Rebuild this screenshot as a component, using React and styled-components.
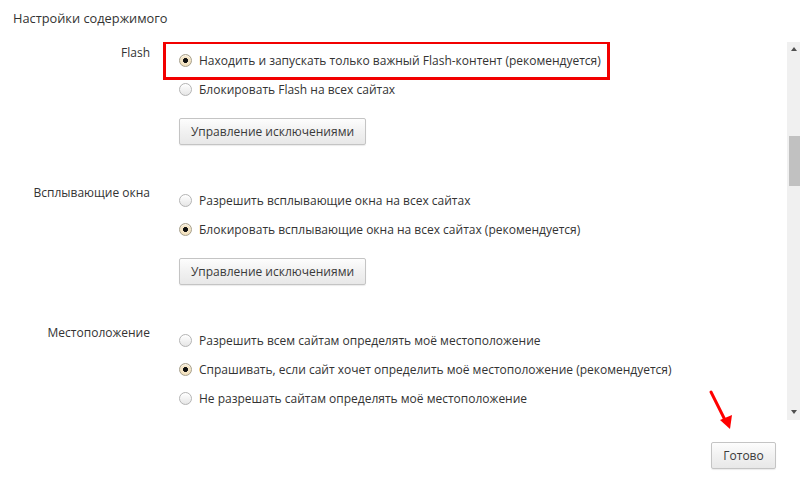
import React from "react";
import styled, { createGlobalStyle } from "styled-components";

const Global = createGlobalStyle`
  html, body { margin: 0; padding: 0; background: #fff; }
  body { font-family: "Open Sans", "Noto Sans", "Liberation Sans", sans-serif; color: #333; }
`;

const Page = styled.div`
  position: relative;
  width: 800px;
  height: 485px;
  overflow: hidden;
  display: flex;
  flex-direction: column;
  background: #fff;
`;

const Header = styled.div`
  height: 42px;
  padding: 9px 0 0 13px;
  box-sizing: border-box;
  font-size: 12.8px;
  line-height: 18px;
  color: #333;
`;

const Body = styled.div`
  display: flex;
  height: 378px;
`;

const Pane = styled.div`
  flex: 1;
  overflow: hidden;
  padding-top: 3px;
`;

const Section = styled.div`
  display: grid;
  grid-template-columns: 150px 1fr;
  column-gap: 29px;
  margin-bottom: 40px;
`;

const Label = styled.div`
  text-align: right;
  font-size: 12px;
  line-height: 16px;
  color: #333;
`;

const Options = styled.div`
  display: flex;
  flex-direction: column;
  align-items: flex-start;
  margin-top: 1px;
`;

const Row = styled.label`
  position: relative;
  display: inline-flex;
  align-items: center;
  height: 29px;
  gap: 7px;
  font-size: 12px;
  color: #333;
  white-space: nowrap;
  &::after {
    content: "";
    display: ${(p) => (p.$highlight ? "block" : "none")};
    position: absolute;
    left: -16px;
    right: -9px;
    top: -5px;
    bottom: -5px;
    border: 3px solid #f20000;
    pointer-events: none;
  }
`;

const Radio = styled.span`
  width: 11px;
  height: 11px;
  border-radius: 50%;
  border: 1px solid ${(p) => (p.$checked ? "#a7a08c" : "#b4b4b4")};
  background: ${(p) =>
    p.$checked
      ? "radial-gradient(circle at 50% 50%, #111 0, #111 2.2px, #f6e7c8 2.8px, #ead6ae 100%)"
      : "linear-gradient(#ffffff, #e6e6e6)"};
  box-shadow: inset 0 1px 1px rgba(255, 255, 255, 0.8);
  flex: none;
`;

const Button = styled.button`
  font-family: inherit;
  font-size: 12px;
  font-weight: 400;
  color: #3a3a3a;
  height: 27px;
  padding: 0;
  white-space: nowrap;
  border: 1px solid #c4c4c4;
  border-radius: 2px;
  background: linear-gradient(#fdfdfd, #f1f1f1 50%, #e8e8e8);
  box-shadow: 0 1px 1px rgba(0, 0, 0, 0.08);
  cursor: pointer;
`;

const ManageButton = styled(Button)`
  margin-top: 14px;
  width: 187px;
`;

const Scrollbar = styled.div`
  width: 13px;
  background: #f0f0f0;
  display: flex;
  flex-direction: column;
  align-items: center;
  justify-content: space-between;
  padding: 5px 0 6px;
  box-sizing: border-box;
  position: relative;
`;

const Arrow = styled.div`
  width: 0;
  height: 0;
  border-left: 3.5px solid transparent;
  border-right: 3.5px solid transparent;
  ${(p) =>
    p.$up ? "border-bottom: 4px solid #505050;" : "border-top: 4px solid #505050;"}
`;

const Thumb = styled.div`
  position: absolute;
  top: 94px;
  left: 2px;
  right: 0;
  height: 50px;
  background: #c1c1c1;
`;

const Footer = styled.div`
  flex: 1;
  display: flex;
  justify-content: flex-end;
  align-items: flex-start;
  padding: 22px 24px 0 0;
`;

const DoneButton = styled(Button)`
  width: 65px;
`;

const Pointer = styled.svg`
  position: absolute;
  left: 700px;
  top: 385px;
  pointer-events: none;
`;

const sections = [
  {
    label: "Flash",
    options: [
      { text: "Находить и запускать только важный Flash-контент (рекомендуется)", checked: true, highlight: true },
      { text: "Блокировать Flash на всех сайтах" },
    ],
    button: true,
  },
  {
    label: "Всплывающие окна",
    options: [
      { text: "Разрешить всплывающие окна на всех сайтах" },
      { text: "Блокировать всплывающие окна на всех сайтах (рекомендуется)", checked: true },
    ],
    button: true,
  },
  {
    label: "Местоположение",
    options: [
      { text: "Разрешить всем сайтам определять моё местоположение" },
      { text: "Спрашивать, если сайт хочет определить моё местоположение (рекомендуется)", checked: true },
      { text: "Не разрешать сайтам определять моё местоположение" },
    ],
  },
];

export default function App() {
  return (
    <>
      <Global />
      <Page>
        <Header>Настройки содержимого</Header>
        <Body>
          <Pane>
            {sections.map((s) => (
              <Section key={s.label}>
                <Label>{s.label}</Label>
                <Options>
                  {s.options.map((o) => (
                    <Row key={o.text} $highlight={o.highlight}>
                      <Radio $checked={o.checked} />
                      {o.text}
                    </Row>
                  ))}
                  {s.button && <ManageButton>Управление исключениями</ManageButton>}
                </Options>
              </Section>
            ))}
          </Pane>
          <Scrollbar>
            <Arrow $up />
            <Thumb />
            <Arrow />
          </Scrollbar>
        </Body>
        <Footer>
          <DoneButton>Готово</DoneButton>
        </Footer>
        <Pointer width="40" height="50" viewBox="0 0 40 50">
          <line x1="11" y1="7" x2="26" y2="37" stroke="#f00" strokeWidth="3" strokeLinecap="round" />
          <polygon points="20,35 32,30 30,44" fill="#f00" />
        </Pointer>
      </Page>
    </>
  );
}
